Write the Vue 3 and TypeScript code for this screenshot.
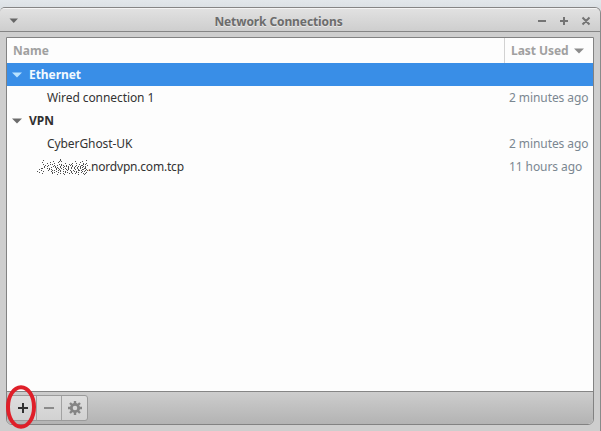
<script setup lang="ts">
interface Connection { name: string; used: string; redacted?: boolean }
interface Group { label: string; selected: boolean; items: Connection[] }

const groups: Group[] = [
  { label: 'Ethernet', selected: true, items: [{ name: 'Wired connection 1', used: '2 minutes ago' }] },
  {
    label: 'VPN',
    selected: false,
    items: [
      { name: 'CyberGhost-UK', used: '2 minutes ago' },
      { name: '.nordvpn.com.tcp', used: '11 hours ago', redacted: true },
    ],
  },
]

// One string per pixel row of the spray that hides the server name.
const spray: string[] = [
  '.......................#............................',
  '......#................#.........................#..',
  '................#.....#.#.............#......#......',
  '.....#.......#.......#.....................#........',
  '..........#......#..........#......#...#......#..#..',
  '......#......#.#......#.#.......#.#.......#...#.#...',
  '........#..#.....#..#...#.#..#...#.#...#....##....#.',
  '.......#..#.....#.#....#...#.#.#...#..#..#.#..#.#...',
  '.......#......#...#.#..#..#....#..#..#..#..#.#..#...',
  '....##....#.#......#.#..#...#..#..#..#..#..#...##...',
  '..#.........#.#....#..#...#..#.#......#..#...##..#..',
  '....#......#...#.#...#.#......#..#..#....##.#...#.#.',
  '#.....#.......#....#...#..#.#.....#..#.#.....#.#....',
  '..#............#.#...#......#.#...#....#.#..#....#..',
  '.....#.........#.......#..#.....#..#..#.......#.#...',
  '....................#......#.............#.....#....',
]
const sprayPath: string = spray
  .map((row, y) => [...row].map((c, x) => (c === '#' ? `M${x} ${y}h1v1h-1z` : '')).join(''))
  .join('')
</script>

<template>
  <div class="desktop">
    <div class="window">
      <header class="titlebar">
        <svg class="menu" width="10" height="6" viewBox="0 0 10 6"><path d="M.5.5h8.500L4.750 5z" fill="#666" /></svg>
        <h1>Network Connections</h1>
        <svg class="controls" width="56" height="12" viewBox="0 0 56 12" fill="none" stroke="#747474" stroke-width="2">
          <path d="M2 6h8M24 6h8M28 2v8M46.500 2.500l7 7M53.500 2.500l-7 7" />
        </svg>
      </header>
      <main class="frame">
        <div class="list">
          <div class="row head">
            <span class="name">Name</span>
            <span class="used">Last Used
              <svg width="10" height="6" viewBox="0 0 10 6"><path d="M0 .5h10L5 5.500z" fill="#8c8c8c" /></svg>
            </span>
          </div>
          <template v-for="g in groups" :key="g.label">
            <div class="row group" :class="{ selected: g.selected }">
              <svg width="10" height="6" viewBox="0 0 10 6"><path d="M0 .5h10L5 5.500z" fill="currentColor" /></svg>
              <span>{{ g.label }}</span>
            </div>
            <div v-for="c in g.items" :key="c.name" class="row item" :class="{ redacted: c.redacted }">
              <svg v-if="c.redacted" width="52" height="16" viewBox="0 0 52 16" shape-rendering="crispEdges">
                <path :d="sprayPath" fill="#505050" />
              </svg>
              <span class="name">{{ c.name }}</span>
              <span class="time">{{ c.used }}</span>
            </div>
          </template>
        </div>
        <footer class="toolbar">
          <div class="buttons">
            <button aria-label="Add">
              <svg width="12" height="12" viewBox="0 0 12 12"><path d="M1 6h10M6 1v10" stroke="#303030" stroke-width="2" /></svg>
              <svg class="ring" width="34" height="48" viewBox="0 0 34 48">
                <ellipse cx="17" cy="24" rx="13" ry="19.800" fill="none" stroke="#df1f29" stroke-width="4" />
              </svg>
            </button>
            <button aria-label="Remove">
              <svg width="12" height="12" viewBox="0 0 12 12"><path d="M1 6h10" stroke="#8b8b8b" stroke-width="2" /></svg>
            </button>
            <button aria-label="Settings">
              <svg width="14" height="14" viewBox="0 0 14 14" fill="none" stroke="#858585">
                <circle cx="7" cy="7" r="3.700" stroke-width="2.800" />
                <path d="M7 0v3M7 11v3M0 7h3M11 7h3M2 2l2 2M10 10l2 2M2 12l2-2M10 4l2-2" stroke-width="2.400" />
              </svg>
            </button>
          </div>
        </footer>
      </main>
    </div>
  </div>
</template>

<style>
body { overflow: hidden; }
</style>

<style scoped>
* { box-sizing: border-box; }
.desktop {
  width: 601px;
  height: 431px;
  padding-top: 7px;
  background: linear-gradient(#e2e7eb, #dce1e5 7px, #dce1e5);
  font: 12px/23px "Noto Sans", "Open Sans", sans-serif;
  color: #333;
}
svg { display: block; flex: none; }
.window {
  height: 424px;
  display: flex;
  flex-direction: column;
  border-top: 1px solid #858585;
  border-right: 1px solid #8a8a8a;
  border-radius: 5px 6px 0 0;
  background: #cecece;
  overflow: hidden;
}
.titlebar {
  height: 24px;
  flex: none;
  display: grid;
  grid-template-columns: 33px 1fr 77px;
  align-items: center;
  padding: 0 8px 0 9px;
  border-top: 1px solid #f4f4f4;
  border-bottom: 1px solid #858585;
  background: linear-gradient(#e1e1e1, #cecece);
}
.titlebar h1 {
  margin: 0;
  padding-top: 2px;
  font-size: 12px;
  line-height: 22px;
  letter-spacing: -0.1px;
  text-align: center;
  color: #6c6c6c;
  text-shadow: 0 1px #e9e9e9;
  white-space: nowrap;
}
.controls { justify-self: end; }
.frame {
  width: 588px;
  height: 388px;
  margin: 5px 0 0 6px;
  display: flex;
  flex-direction: column;
  border: 1px solid #828282;
  border-radius: 0 0 6px 6px;
  background: #fdfdfd;
}
.list { flex: 1; }
.row { display: flex; height: 23px; align-items: center; white-space: nowrap; }
.head { height: 25px; font-weight: 700; color: #a0a0a0; }
.head .name { flex: 1; padding-left: 6px; }
.head .used {
  width: 89px;
  height: 25px;
  display: flex;
  align-items: center;
  gap: 5px;
  padding-left: 6px;
  border-left: 1px solid #d2d2d2;
  letter-spacing: -0.05px;
}
.group { gap: 7px; padding-left: 5px; font-weight: 700; color: #303030; letter-spacing: -0.05px; }
.group svg { color: #6c6c6c; }
.selected { background: #398ee7; color: #f2faff; }
.selected svg { color: #b9e3ff; }
.item { padding-left: 40px; letter-spacing: -0.08px; }
.item .name { flex: 1; }
.item .time { width: 84px; color: #7b8791; }
.redacted { padding-left: 30px; }
.redacted .name { margin-left: -1px; letter-spacing: -0.2px; }
.toolbar {
  height: 33px;
  padding: 3px 0 0;
  border-top: 1px solid #858585;
  border-radius: 0 0 5px 5px;
  background: linear-gradient(#cdcdcd, #b3b3b3);
}
.buttons {
  width: 80px;
  height: 26px;
  margin-left: 1px;
  display: grid;
  grid-template-columns: 28px 25px 25px;
  border: 1px solid #9b9b9b;
  border-radius: 3px;
  background: linear-gradient(#dedede, #d2d2d2);
}
button {
  position: relative;
  display: flex;
  align-items: center;
  justify-content: center;
  padding: 0;
  border: 0;
  border-right: 1px solid #a2a2a2;
  background: none;
}
button:first-child { padding-left: 1px; }
button:last-child { border-right: 0; }
.ring { position: absolute; left: -5px; top: -13px; z-index: 1; }
</style>
